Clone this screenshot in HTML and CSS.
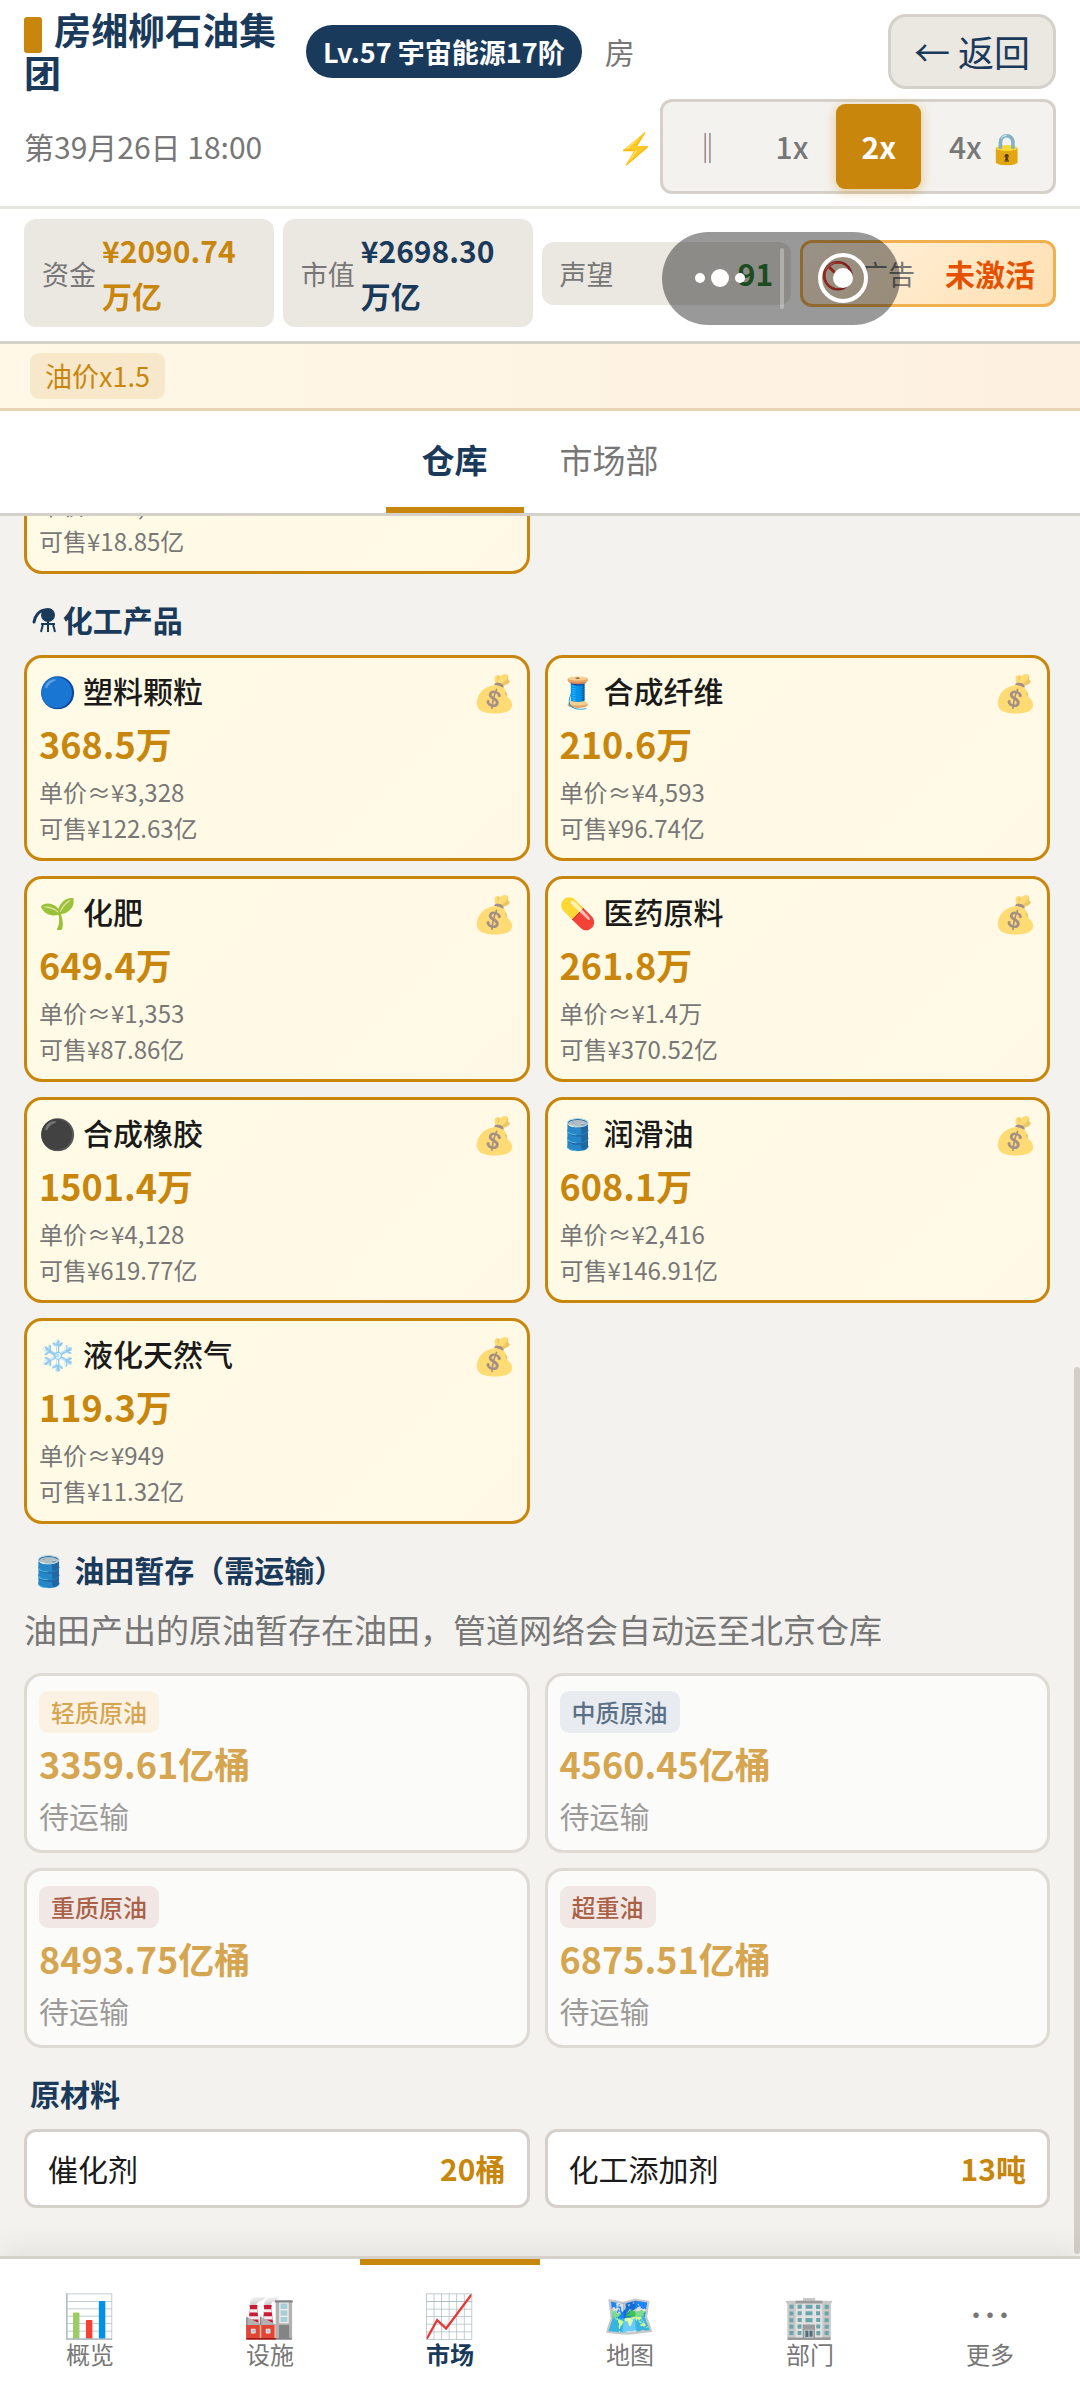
FILE: index.html
```html
<!DOCTYPE html>
<html lang="zh-CN">
<head>
    <meta charset="UTF-8">
    <meta name="viewport" content="width=device-width, initial-scale=1.0">
    <title>房缃柳石油集团</title>
    <link rel="stylesheet" href="styles.css">
</head>
<body>
<header class="header">
    <div class="header-row">
        <h1 class="company"><span class="company-mark"></span>房缃柳石油集团</h1>
        <span class="level-badge">Lv.57 宇宙能源17阶</span>
        <span class="player">房</span>
        <button class="back-btn">← 返回</button>
    </div>
    <div class="header-row">
        <span class="date">第39月26日 18:00</span>
        <span class="bolt">⚡</span>
        <div class="speed">
            <button class="pause">‖</button>
            <button>1x</button>
            <button class="active">2x</button>
            <button>4x 🔒</button>
        </div>
    </div>
</header>

<section class="stats">
    <div class="stat">
        <span class="stat-label">资金</span>
        <span class="stat-value gold">¥2090.74万亿</span>
    </div>
    <div class="stat">
        <span class="stat-label">市值</span>
        <span class="stat-value">¥2698.30万亿</span>
    </div>
    <div class="stat">
        <span class="stat-label">声望</span>
        <span class="stat-value green">91</span>
    </div>
    <div class="stat stat-ad">
        <span class="stat-label">🚫 广告</span>
        <span class="stat-value orange">未激活</span>
    </div>
</section>

<!-- 小程序胶囊按钮 -->
<div class="capsule">
    <svg viewBox="0 0 238 93" width="238" height="93">
        <circle cx="38" cy="46" r="5" fill="#fff"/>
        <circle cx="58" cy="46" r="9" fill="#fff"/>
        <circle cx="78" cy="46" r="5" fill="#fff"/>
        <rect x="118" y="16" width="4" height="61" rx="2" fill="#fff" fill-opacity="0.3"/>
        <circle cx="181" cy="46" r="23" fill="none" stroke="#fff" stroke-width="4"/>
        <circle cx="181" cy="46" r="10" fill="#fff"/>
    </svg>
</div>

<div class="buffs">
    <span class="buff">油价x1.5</span>
</div>

<nav class="tabs">
    <button class="tab active">仓库</button>
    <button class="tab">市场部</button>
</nav>

<div class="viewport">
<main class="content">
    <div class="grid">
        <div class="card sellable">
            <div class="price">单价≈¥1,200</div>
            <div class="price">可售¥18.85亿</div>
        </div>
    </div>

    <h2 class="section-title">
        <svg class="flask" viewBox="0 0 24 26" width="24" height="26">
            <path d="M2 15C3 9 7 3 14 3" fill="none" stroke="#1a3a5c" stroke-width="3" stroke-linecap="round"/>
            <circle cx="16" cy="8" r="7" fill="#1a3a5c"/>
            <path d="M9 17h14M11 17l-2 8M16 13v12M21 17l2 8" fill="none" stroke="#1a3a5c" stroke-width="2"/>
        </svg>
        化工产品
    </h2>
    <div class="grid">
        <div class="card sellable">
            <div class="name">🔵 塑料颗粒</div>
            <div class="amount">368.5万</div>
            <div class="price">单价≈¥3,328</div>
            <div class="price">可售¥122.63亿</div>
            <span class="bag">💰</span>
        </div>
        <div class="card sellable">
            <div class="name">🧵 合成纤维</div>
            <div class="amount">210.6万</div>
            <div class="price">单价≈¥4,593</div>
            <div class="price">可售¥96.74亿</div>
            <span class="bag">💰</span>
        </div>
        <div class="card sellable">
            <div class="name">🌱 化肥</div>
            <div class="amount">649.4万</div>
            <div class="price">单价≈¥1,353</div>
            <div class="price">可售¥87.86亿</div>
            <span class="bag">💰</span>
        </div>
        <div class="card sellable">
            <div class="name">💊 医药原料</div>
            <div class="amount">261.8万</div>
            <div class="price">单价≈¥1.4万</div>
            <div class="price">可售¥370.52亿</div>
            <span class="bag">💰</span>
        </div>
        <div class="card sellable">
            <div class="name">⚫ 合成橡胶</div>
            <div class="amount">1501.4万</div>
            <div class="price">单价≈¥4,128</div>
            <div class="price">可售¥619.77亿</div>
            <span class="bag">💰</span>
        </div>
        <div class="card sellable">
            <div class="name">🛢️ 润滑油</div>
            <div class="amount">608.1万</div>
            <div class="price">单价≈¥2,416</div>
            <div class="price">可售¥146.91亿</div>
            <span class="bag">💰</span>
        </div>
        <div class="card sellable">
            <div class="name">❄️ 液化天然气</div>
            <div class="amount">119.3万</div>
            <div class="price">单价≈¥949</div>
            <div class="price">可售¥11.32亿</div>
            <span class="bag">💰</span>
        </div>
    </div>

    <h2 class="section-title">🛢️ 油田暂存（需运输）</h2>
    <p class="hint">油田产出的原油暂存在油田，管道网络会自动运至北京仓库</p>
    <div class="grid">
        <div class="card pending">
            <div class="tag-row"><span class="tag light">轻质原油</span></div>
            <div class="amount">3359.61亿桶</div>
            <div class="status">待运输</div>
        </div>
        <div class="card pending">
            <div class="tag-row"><span class="tag medium">中质原油</span></div>
            <div class="amount">4560.45亿桶</div>
            <div class="status">待运输</div>
        </div>
        <div class="card pending">
            <div class="tag-row"><span class="tag heavy">重质原油</span></div>
            <div class="amount">8493.75亿桶</div>
            <div class="status">待运输</div>
        </div>
        <div class="card pending">
            <div class="tag-row"><span class="tag heavy">超重油</span></div>
            <div class="amount">6875.51亿桶</div>
            <div class="status">待运输</div>
        </div>
    </div>

    <h2 class="section-title">原材料</h2>
    <div class="grid">
        <div class="material">
            <span>催化剂</span>
            <span class="material-count">20桶</span>
        </div>
        <div class="material">
            <span>化工添加剂</span>
            <span class="material-count">13吨</span>
        </div>
    </div>
</main>
<div class="scroll-thumb"></div>
</div>

<nav class="bottom-nav">
    <button class="nav-item"><span class="nav-icon">📊</span>概览</button>
    <button class="nav-item"><span class="nav-icon">🏭</span>设施</button>
    <button class="nav-item active"><span class="nav-icon">📈</span>市场</button>
    <button class="nav-item"><span class="nav-icon">🗺️</span>地图</button>
    <button class="nav-item"><span class="nav-icon">🏢</span>部门</button>
    <button class="nav-item"><span class="nav-icon">⋯</span>更多</button>
</nav>
</body>
</html>
```
FILE: styles.css
```css
* {
    box-sizing: border-box;
}

body {
    font-family: "Noto Sans CJK SC", "Noto Color Emoji", sans-serif;
    font-size: 30px;
    line-height: 45px;
    margin: 0;
    height: 100vh;
    display: flex;
    flex-direction: column;
    background-color: #f4f2ee;
    color: #1a1a1a;
    position: relative;
}

button {
    font: inherit;
    color: inherit;
    background: none;
    border: none;
    margin: 0;
    padding: 0;
    cursor: pointer;
}

/* 顶部 */
.header {
    background-color: #fff;
    padding: 8px 24px 12px;
    border-bottom: 3px solid #e8e6e1;
}

.header-row {
    display: flex;
    align-items: center;
    gap: 20px;
}

.header-row + .header-row {
    margin-top: 5px;
    gap: 5px;
}

.company {
    margin: 0;
    max-width: 262px;
    font-size: 37px;
    line-height: 43px;
    font-weight: 700;
    color: #1a3a5c;
}

.company-mark {
    display: inline-block;
    width: 18px;
    height: 36px;
    margin: -8px 12px -8px 0;
    border-radius: 3px;
    background-color: #c8860d;
    vertical-align: middle;
}

.level-badge {
    padding: 6px 17px;
    border-radius: 27px;
    background-color: #1a3a5c;
    color: #fff;
    font-size: 27px;
    line-height: 41px;
    font-weight: 700;
    white-space: nowrap;
}

.player,
.date {
    color: #777;
}

.player {
    margin-left: 3px;
}

.back-btn {
    margin-left: auto;
    padding: 9px 23px;
    border: 3px solid #d5d1ca;
    border-radius: 18px;
    background-color: #ebe8e2;
    color: #1a3a5c;
    font-size: 36px;
    line-height: 51px;
}

.bolt {
    margin-left: auto;
}

.speed {
    display: flex;
    gap: 3px;
    padding: 2px;
    border: 3px solid #d5d1ca;
    border-radius: 12px;
    background-color: #f4f2ee;
}

.speed button {
    padding: 20px 25px;
    border-radius: 9px;
    color: #777;
    font-weight: 500;
}

.speed .pause {
    padding-left: 28px;
}

.speed .active {
    background-color: #c8860d;
    color: #fff;
    font-weight: 700;
    box-shadow: 0 3px 12px rgba(200, 134, 13, 0.4);
}

/* 数据栏 */
.stats {
    display: flex;
    align-items: center;
    gap: 9px;
    padding: 10px 24px 14px;
    background-color: #fff;
    border-bottom: 3px solid #d5d3c8;
}

.stat {
    flex: 1;
    display: flex;
    align-items: center;
    justify-content: space-between;
    gap: 6px;
    padding: 9px 18px;
    border-radius: 12px;
    background-color: #ebe8e2;
}

.stat-label {
    color: #777;
    font-size: 27px;
    white-space: nowrap;
}

.stat-value {
    color: #1a3a5c;
    font-weight: 700;
}

.gold {
    color: #c8860d;
}

.green {
    color: #2e7d32;
}

.orange {
    color: #e65100;
}

.stat-ad {
    padding: 8px 18px;
    border: 3px solid #f0b050;
    background: linear-gradient(135deg, #fff3e0, #ffe0b2);
}

.stat-ad .stat-value {
    white-space: nowrap;
}

.capsule {
    position: absolute;
    top: 232px;
    right: 180px;
    height: 93px;
    border-radius: 47px;
    background-color: rgba(0, 0, 0, 0.4);
}

.capsule svg {
    display: block;
}

.buffs {
    display: flex;
    padding: 9px 30px;
    background: linear-gradient(90deg, #fff8e7, #fdf0e0);
    border-bottom: 3px solid #e8d5b5;
}

.buff {
    padding: 0 15px;
    border-radius: 9px;
    background-color: #f7e8cc;
    color: #c8860d;
    font-size: 27px;
    line-height: 46px;
}

/* 标签页 */
.tabs {
    display: flex;
    justify-content: center;
    background-color: #fff;
    border-bottom: 3px solid #d5d1ca;
}

.tab {
    padding: 24px 36px;
    border-bottom: 6px solid transparent;
    color: #777;
    font-size: 33px;
    line-height: 48px;
}

.tab.active {
    border-bottom-color: #c8860d;
    color: #1a3a5c;
    font-weight: 600;
}

/* 仓库内容 */
.viewport {
    flex: 1;
    min-height: 0;
    position: relative;
    overflow: hidden;
    display: flex;
    flex-direction: column;
    justify-content: flex-end;
}

.content {
    padding: 0 30px 48px 24px;
}

.scroll-thumb {
    position: absolute;
    right: 0;
    bottom: 2px;
    width: 6px;
    height: 51%;
    border-radius: 3px;
    background-color: #d3cec8;
}

.grid {
    display: grid;
    grid-template-columns: 1fr 1fr;
    gap: 15px;
}

.section-title {
    margin: 23px 0 13px;
    padding-left: 6px;
    font-size: 30px;
    font-weight: 700;
    color: #1a3a5c;
}

.flask {
    margin-left: 2px;
    vertical-align: -1px;
}

.hint {
    margin: 0 0 20px;
    color: #777;
    font-size: 33px;
    line-height: 48px;
}

.card {
    position: relative;
    padding: 12px;
    border: 3px solid #d5d1ca;
    border-radius: 18px;
    background-color: #fff;
}

.sellable {
    border-color: #c8860d;
    background: linear-gradient(135deg, #fffbe6, #fff8e6);
}

.pending {
    opacity: 0.7;
}

.name {
    line-height: 41px;
    font-weight: 500;
}

.amount {
    margin: 2px 0 3px;
    color: #c8860d;
    font-size: 36px;
    line-height: 54px;
    font-weight: 700;
}

.name + .amount {
    margin: 5px 0 4px;
}

.price {
    color: #777;
    font-size: 24px;
    line-height: 36px;
}

.status {
    color: #777;
}

.bag {
    position: absolute;
    top: 10px;
    right: 9px;
    opacity: 0.6;
    font-size: 36px;
}

.tag-row {
    display: flex;
    align-items: center;
    height: 46px;
    padding-top: 2px;
}

.tag {
    padding: 3px 12px;
    border-radius: 9px;
    font-size: 24px;
    line-height: 36px;
    font-weight: 500;
}

.light {
    background-color: #fff3e0;
    color: #c8860d;
}

.medium {
    background-color: #e3e9f0;
    color: #1a3a5c;
}

.heavy {
    background-color: #f1e4e3;
    color: #8b2500;
}

.material {
    display: flex;
    justify-content: space-between;
    padding: 14px 21px;
    border: 3px solid #d5d1ca;
    border-radius: 12px;
    background-color: #fff;
}

.material-count {
    color: #c8860d;
    font-weight: 600;
}

/* 底部导航 */
.bottom-nav {
    position: relative;
    display: flex;
    background-color: #fff;
    border-top: 3px solid #d5d1ca;
    box-shadow: 0 -6px 30px rgba(0, 0, 0, 0.08);
}

.nav-item {
    flex: 1;
    display: flex;
    flex-direction: column;
    align-items: center;
    padding: 24px 0 28px;
    border-top: 6px solid transparent;
    color: #777;
    font-size: 24px;
    line-height: 36px;
}

.nav-item.active {
    border-top-color: #c8860d;
    color: #1a3a5c;
    font-weight: 600;
}

.nav-icon {
    font-size: 42px;
    line-height: 47px;
}
```
